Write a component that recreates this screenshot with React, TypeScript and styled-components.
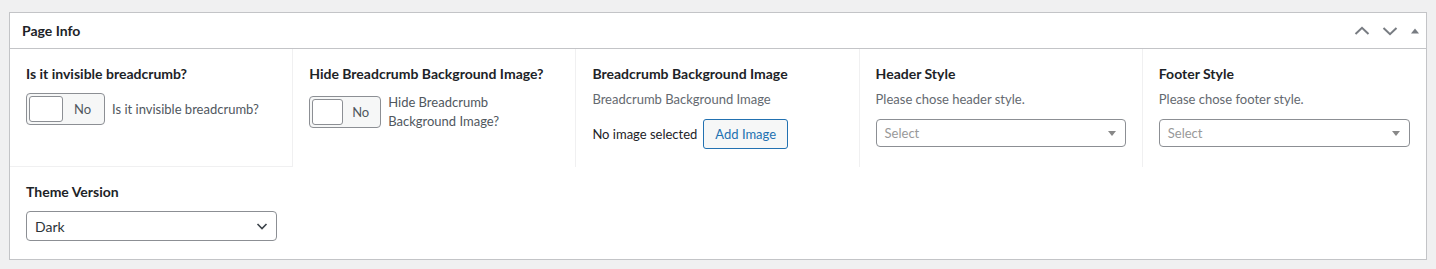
import React from "react";
import styled, { createGlobalStyle } from "styled-components";

const Global = createGlobalStyle`
  html, body { margin: 0; padding: 0; background: #f0f0f1; }
  body { font-family: Lato, "Noto Sans", sans-serif; color: #1d2327; font-size: 13px; }
  * { box-sizing: border-box; }
`;

const Page = styled.div`
  padding: 12px 9px 9px 9px;
`;

const Panel = styled.section`
  background: #fff;
  border: 1px solid #c3c4c7;
`;

const Header = styled.header`
  height: 36px;
  display: flex;
  align-items: center;
  justify-content: space-between;
  padding: 0 2px 0 12px;
  border-bottom: 1px solid #c3c4c7;
`;

const Title = styled.h2`
  margin: 0;
  font-size: 14px;
  font-weight: 700;
  color: #1d2327;
`;

const HeaderActions = styled.div`
  display: flex;
  align-items: center;
  gap: 4px;
`;

const IconButton = styled.button<{ $narrow?: boolean }>`
  width: ${(p) => (p.$narrow ? 18 : 24)}px;
  height: 24px;
  padding: 0;
  border: 0;
  background: transparent;
  display: flex;
  align-items: center;
  justify-content: center;
  color: #787c82;
`;

const Grid = styled.div`
  display: grid;
  grid-template-columns: repeat(5, 1fr);
`;

const Column = styled.div<{ $first?: boolean; $last?: boolean }>`
  padding: 15px 16px 16px 16px;
  min-height: 118px;
  border-right: ${(p) => (p.$last ? "0" : "1px solid #f0f0f1")};
  border-bottom: ${(p) => (p.$first ? "1px solid #f0f0f1" : "0")};
`;

const Row2 = styled.div`
  padding: 15px 16px 18px 16px;
  width: 283px;
`;

const Label = styled.div`
  font-size: 14px;
  font-weight: 700;
  line-height: 20px;
  color: #1d2327;
`;

const Description = styled.div`
  margin-top: 5px;
  font-size: 13px;
  line-height: 20px;
  color: #646970;
`;

const ToggleRow = styled.div`
  margin-top: 9px;
  display: flex;
  align-items: center;
  gap: 7px;
`;

const Toggle = styled.div<{ $width: number }>`
  flex: 0 0 ${(p) => p.$width}px;
  height: 32px;
  display: flex;
  align-items: stretch;
  padding: 2px;
  border: 1px solid #8c8f94;
  border-radius: 4px;
  background: #f6f7f7;
`;

const Knob = styled.span`
  width: 47%;
  background: #fff;
  border: 1px solid #8c8f94;
  border-radius: 3px;
`;

const ToggleText = styled.span`
  flex: 1;
  display: flex;
  align-items: center;
  justify-content: center;
  font-size: 13px;
  color: #50575e;
`;

const ToggleLabel = styled.span`
  font-size: 13px;
  line-height: 19px;
  color: #50575e;
`;

const MediaRow = styled.div`
  margin-top: 10px;
  display: flex;
  align-items: center;
  gap: 6px;
  color: #1d2327;
  font-size: 13px;
`;

const Button = styled.button`
  height: 30px;
  padding: 0 11px;
  font-family: inherit;
  font-size: 13px;
  color: #2271b1;
  background: #f6f7f7;
  border: 1px solid #2271b1;
  border-radius: 3px;
`;

const FakeSelect = styled.div`
  margin-top: 10px;
  height: 28px;
  display: flex;
  align-items: center;
  justify-content: space-between;
  padding: 0 9px 0 8px;
  border: 1px solid #8c8f94;
  border-radius: 4px;
  font-size: 13px;
  color: #999;
  background: #fff;
`;

const Caret = styled.span`
  width: 0;
  height: 0;
  border-left: 4px solid transparent;
  border-right: 4px solid transparent;
  border-top: 5px solid #888;
`;

const WpSelect = styled.div`
  margin-top: 9px;
  height: 30px;
  width: 251px;
  display: flex;
  align-items: center;
  justify-content: space-between;
  padding: 0 8px;
  border: 1px solid #8c8f94;
  border-radius: 4px;
  font-size: 14px;
  color: #2c3338;
  background: #fff;
`;

const Chevron = ({ dir }: { dir: "up" | "down" }) => (
  <svg width="16" height="16" viewBox="0 0 16 16">
    <path
      d={dir === "up" ? "M1.5 11 L8 4.8 L14.5 11" : "M1.5 5 L8 11.2 L14.5 5"}
      fill="none"
      stroke="currentColor"
      strokeWidth="2"
    />
  </svg>
);

const Triangle = () => (
  <svg width="10" height="10" viewBox="0 0 10 10">
    <path d="M1 7.5 L5 2.5 L9 7.5 Z" fill="currentColor" />
  </svg>
);

const SmallChevron = () => (
  <svg width="12" height="12" viewBox="0 0 12 12">
    <path d="M1.5 4 L6 8.5 L10.5 4" fill="none" stroke="#3c434a" strokeWidth="1.6" />
  </svg>
);

export default function App() {
  return (
    <>
      <Global />
      <Page>
        <Panel>
          <Header>
            <Title>Page Info</Title>
            <HeaderActions>
              <IconButton aria-label="Move up"><Chevron dir="up" /></IconButton>
              <IconButton aria-label="Move down"><Chevron dir="down" /></IconButton>
              <IconButton $narrow aria-label="Toggle panel"><Triangle /></IconButton>
            </HeaderActions>
          </Header>
          <Grid>
            <Column $first>
              <Label>Is it invisible breadcrumb?</Label>
              <ToggleRow>
                <Toggle $width={79}>
                  <Knob />
                  <ToggleText>No</ToggleText>
                </Toggle>
                <ToggleLabel>Is it invisible breadcrumb?</ToggleLabel>
              </ToggleRow>
            </Column>
            <Column>
              <Label>Hide Breadcrumb Background Image?</Label>
              <ToggleRow>
                <Toggle $width={72}>
                  <Knob />
                  <ToggleText>No</ToggleText>
                </Toggle>
                <ToggleLabel>Hide Breadcrumb<br />Background Image?</ToggleLabel>
              </ToggleRow>
            </Column>
            <Column>
              <Label>Breadcrumb Background Image</Label>
              <Description>Breadcrumb Background Image</Description>
              <MediaRow>
                <span>No image selected</span>
                <Button>Add Image</Button>
              </MediaRow>
            </Column>
            <Column>
              <Label>Header Style</Label>
              <Description>Please chose header style.</Description>
              <FakeSelect>
                <span>Select</span>
                <Caret />
              </FakeSelect>
            </Column>
            <Column $last>
              <Label>Footer Style</Label>
              <Description>Please chose footer style.</Description>
              <FakeSelect>
                <span>Select</span>
                <Caret />
              </FakeSelect>
            </Column>
          </Grid>
          <Row2>
            <Label>Theme Version</Label>
            <WpSelect>
              <span>Dark</span>
              <SmallChevron />
            </WpSelect>
          </Row2>
        </Panel>
      </Page>
    </>
  );
}
